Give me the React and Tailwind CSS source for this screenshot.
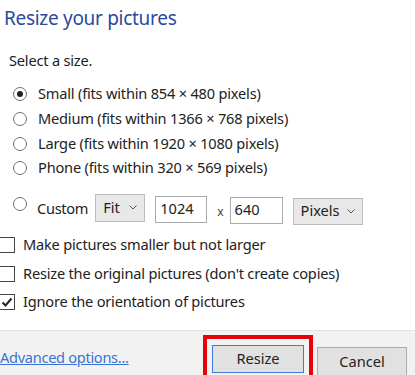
import React from "react";

const font = { fontFamily: '"Noto Sans", "Open Sans", sans-serif' };

function Radio({ checked, label }) {
  return (
    <div className="flex items-center h-[24.7px]">
      <div className="ml-[13px] w-[14px] h-[14px] rounded-full border border-[#6f6f6f] bg-white flex items-center justify-center">
        {checked && <div className="w-[6px] h-[6px] rounded-full bg-[#222]" />}
      </div>
      <span className="ml-[11px] text-[14.6px] text-[#222] tracking-[-0.2px]">{label}</span>
    </div>
  );
}

function Checkbox({ checked, label }) {
  return (
    <div className="flex items-center h-[28.5px]">
      <div className="w-[16px] h-[16px] border border-[#444] bg-white flex items-center justify-center -ml-[1px]">
        {checked && (
          <svg width="12" height="12" viewBox="0 0 12 12">
            <path d="M1.5 6.5 L4.5 9.5 L10.5 2.5" fill="none" stroke="#222" strokeWidth="2" />
          </svg>
        )}
      </div>
      <span className="ml-[8px] text-[14.6px] text-[#222] tracking-[-0.2px]">{label}</span>
    </div>
  );
}

function Chevron() {
  return (
    <svg width="8" height="5" viewBox="0 0 8 5" className="ml-auto">
      <path d="M0.5 0.5 L4 4 L7.5 0.5" fill="none" stroke="#555" strokeWidth="1" />
    </svg>
  );
}

export default function App() {
  return (
    <div className="w-[415px] h-[375px] bg-white overflow-hidden flex flex-col" style={font}>
      <div className="pl-[4px] pt-[4px] text-[19px] leading-[28px] text-[#2a4a9e] tracking-[-0.3px]">
        Resize your pictures
      </div>
      <div className="pl-[9px] mt-[18px] text-[14.6px] leading-[20px] text-[#222] tracking-[-0.2px]">
        Select a size.
      </div>
      <div className="mt-[12px] flex flex-col">
        <Radio checked label="Small (fits within 854 × 480 pixels)" />
        <Radio label="Medium (fits within 1366 × 768 pixels)" />
        <Radio label="Large (fits within 1920 × 1080 pixels)" />
        <Radio label="Phone (fits within 320 × 569 pixels)" />
      </div>
      <div className="flex items-start mt-[4px] h-[44px]">
        <div className="ml-[13px] mt-[12px] w-[14px] h-[14px] rounded-full border border-[#6f6f6f] bg-white" />
        <span className="ml-[10px] mt-[13px] text-[14.6px] text-[#222] tracking-[-0.3px]">Custom</span>
        <div className="ml-[7px] mt-[9px] w-[50px] h-[28px] border border-[#bbb] bg-[#e8e8e8] flex items-center px-[7px] text-[14.6px] text-[#222]">
          <span>Fit</span>
          <Chevron />
        </div>
        <div className="ml-[10px] mt-[11px] w-[52px] h-[27px] border border-[#aaa] bg-white px-[4px] text-[14.6px] leading-[22px] text-[#222]">
          1024
        </div>
        <span className="ml-[10px] mt-[18px] text-[12px] text-[#444]">x</span>
        <div className="ml-[6px] mt-[12px] w-[53px] h-[27px] border border-[#aaa] bg-white px-[4px] text-[14.6px] leading-[22px] text-[#222]">
          640
        </div>
        <div className="ml-[10px] mt-[13px] w-[70px] h-[27px] border border-[#bbb] bg-[#e8e8e8] flex items-center px-[7px] text-[14.6px] text-[#222]">
          <span>Pixels</span>
          <Chevron />
        </div>
      </div>
      <div className="mt-[2px] flex flex-col">
        <Checkbox label="Make pictures smaller but not larger" />
        <Checkbox label="Resize the original pictures (don't create copies)" />
        <Checkbox checked label="Ignore the orientation of pictures" />
      </div>
      <div className="mt-auto h-[45px] bg-[#f2f2f2] border-t border-[#e2e2e2] flex items-start">
        <div className="w-[203px] mt-[14px]">
          <a className="text-[14.6px] text-[#3b72d6] underline tracking-[-0.3px]">Advanced options...</a>
        </div>
        <div className="mt-[4px] border-[4px] border-[#e8000b] pt-[6px] px-[5px] h-[44px]">
          <div className="w-[92px] h-[28px] border border-[#3a7fd4] bg-[#e1e1e1] flex items-center justify-center text-[14.6px] text-[#222]">
            Resize
          </div>
        </div>
        <div className="ml-[4px] mt-[16px] w-[90px] h-[30px] border border-[#adadad] bg-[#e1e1e1] flex items-center justify-center text-[14.6px] text-[#222]">
          Cancel
        </div>
      </div>
    </div>
  );
}
